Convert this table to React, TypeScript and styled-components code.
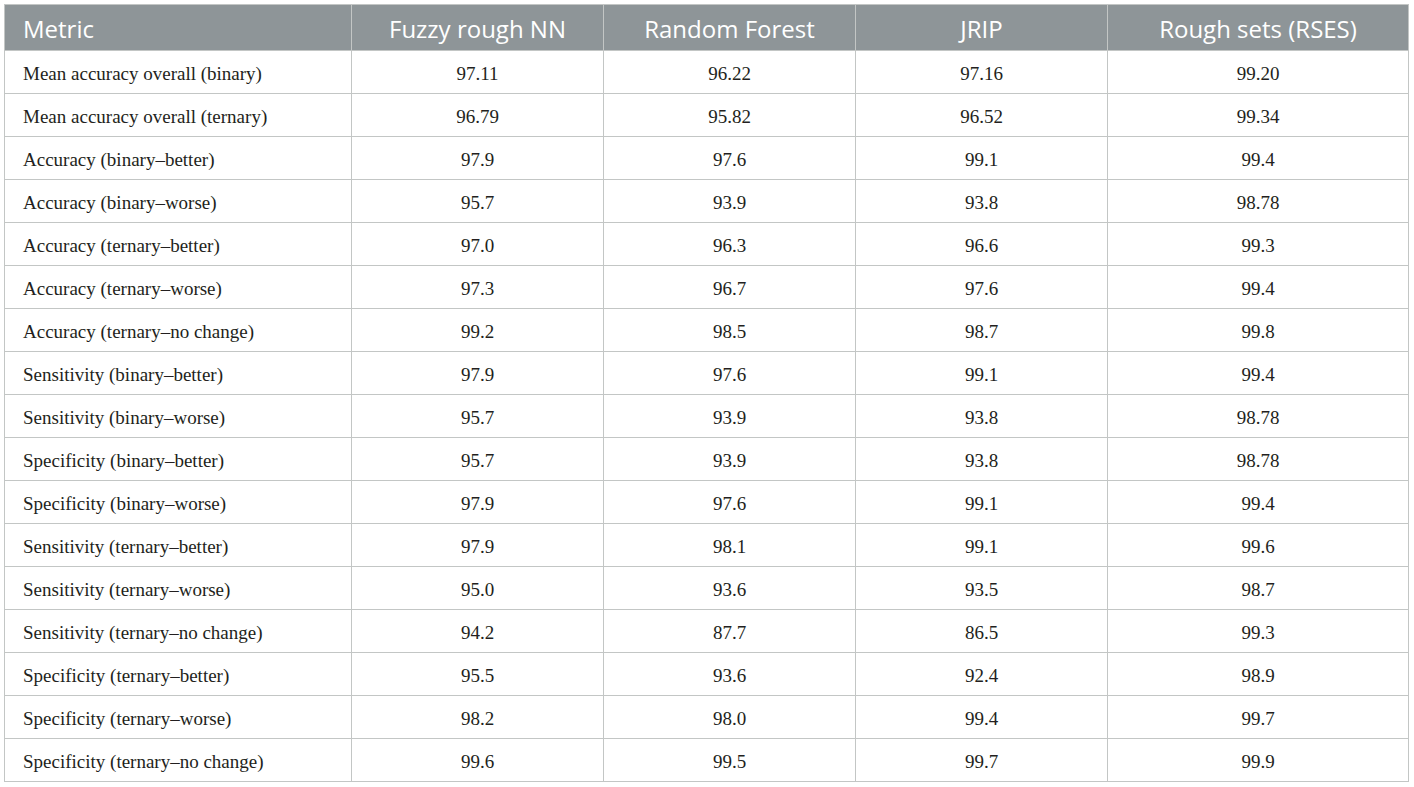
import React from "react";
import styled, { createGlobalStyle } from "styled-components";

const Global = createGlobalStyle`
  html, body { margin: 0; padding: 0; background: #ffffff; }
  body { padding: 4px; }
`;

const Table = styled.table`
  width: 1404px;
  table-layout: fixed;
  border-collapse: collapse;
  border: 1px solid #c3c6c5;
`;

const Col = styled.col<{ $w: number }>`
  width: ${(p) => p.$w}px;
`;

const HeadRow = styled.tr`
  height: 46px;
  background: #8e9598;
`;

const HeadCell = styled.th<{ $left?: boolean }>`
  font-family: "Open Sans", "Liberation Sans", sans-serif;
  font-weight: 400;
  font-size: 24px;
  line-height: 1;
  color: #ffffff;
  text-align: ${(p) => (p.$left ? "left" : "center")};
  padding: 3px 0 0 ${(p) => (p.$left ? "18px" : "0")};
  border: 1px solid #c3c6c5;
  border-top: none;
  border-bottom: 1px solid #c3c6c5;
`;

const BodyRow = styled.tr`
  height: 43px;
`;

const Cell = styled.td<{ $left?: boolean }>`
  font-family: "Liberation Serif", "Times New Roman", serif;
  font-size: 19px;
  line-height: 1;
  color: #231f20;
  text-align: ${(p) => (p.$left ? "left" : "center")};
  padding: 3px 0 0 ${(p) => (p.$left ? "18px" : "0")};
  border: 1px solid #c3c6c5;
`;

const headers = ["Fuzzy rough NN", "Random Forest", "JRIP", "Rough sets (RSES)"];

const rows: [string, string, string, string, string][] = [
  ["Mean accuracy overall (binary)", "97.11", "96.22", "97.16", "99.20"],
  ["Mean accuracy overall (ternary)", "96.79", "95.82", "96.52", "99.34"],
  ["Accuracy (binary–better)", "97.9", "97.6", "99.1", "99.4"],
  ["Accuracy (binary–worse)", "95.7", "93.9", "93.8", "98.78"],
  ["Accuracy (ternary–better)", "97.0", "96.3", "96.6", "99.3"],
  ["Accuracy (ternary–worse)", "97.3", "96.7", "97.6", "99.4"],
  ["Accuracy (ternary–no change)", "99.2", "98.5", "98.7", "99.8"],
  ["Sensitivity (binary–better)", "97.9", "97.6", "99.1", "99.4"],
  ["Sensitivity (binary–worse)", "95.7", "93.9", "93.8", "98.78"],
  ["Specificity (binary–better)", "95.7", "93.9", "93.8", "98.78"],
  ["Specificity (binary–worse)", "97.9", "97.6", "99.1", "99.4"],
  ["Sensitivity (ternary–better)", "97.9", "98.1", "99.1", "99.6"],
  ["Sensitivity (ternary–worse)", "95.0", "93.6", "93.5", "98.7"],
  ["Sensitivity (ternary–no change)", "94.2", "87.7", "86.5", "99.3"],
  ["Specificity (ternary–better)", "95.5", "93.6", "92.4", "98.9"],
  ["Specificity (ternary–worse)", "98.2", "98.0", "99.4", "99.7"],
  ["Specificity (ternary–no change)", "99.6", "99.5", "99.7", "99.9"],
];

export default function App() {
  return (
    <>
      <Global />
      <Table>
        <colgroup>
          <Col $w={347} />
          <Col $w={252} />
          <Col $w={252} />
          <Col $w={252} />
          <Col $w={301} />
        </colgroup>
        <thead>
          <HeadRow>
            <HeadCell $left>Metric</HeadCell>
            {headers.map((h) => (
              <HeadCell key={h}>{h}</HeadCell>
            ))}
          </HeadRow>
        </thead>
        <tbody>
          {rows.map((r, i) => (
            <BodyRow key={i}>
              <Cell $left>{r[0]}</Cell>
              {r.slice(1).map((v, j) => (
                <Cell key={j}>{v}</Cell>
              ))}
            </BodyRow>
          ))}
        </tbody>
      </Table>
    </>
  );
}
